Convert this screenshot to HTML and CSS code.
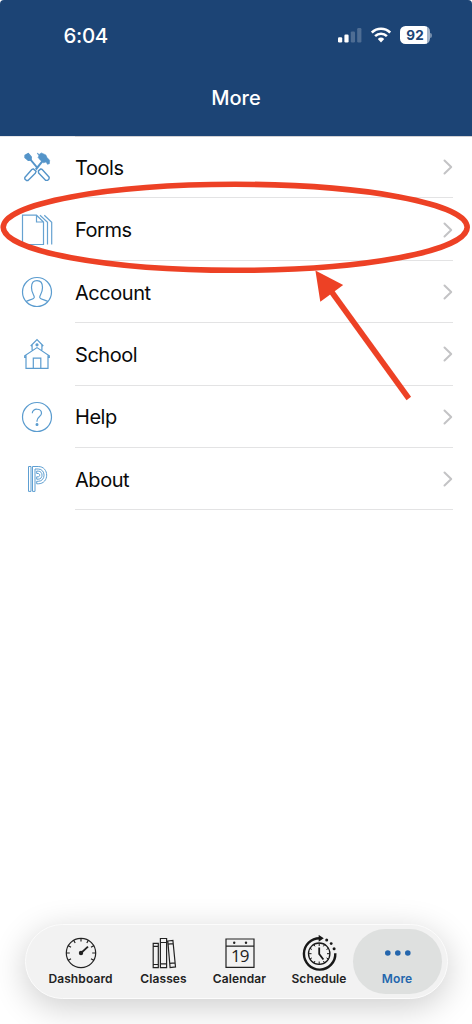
FILE: index.html
```html
<!DOCTYPE html>
<html lang="en">
<head>
<meta charset="utf-8">
<title>More</title>
<link rel="stylesheet" href="styles.css">
</head>
<body>
<div class="screen">
  <header class="header">
    <div class="status">
      <span class="time">6:04</span>
      <div class="indicators">
        <svg class="signal" width="24" height="16" viewBox="0 0 24 16" fill="#fff"><rect x="0" y="10.3" width="4.2" height="5.2" rx="1.2"/><rect x="6.4" y="7.6" width="4.2" height="7.9" rx="1.2"/><g opacity=".22"><rect x="12.8" y="4.4" width="4.2" height="11.1" rx="1.2"/><rect x="19.2" y="1" width="4.2" height="14.5" rx="1.2"/></g></svg>
        <svg class="wifi" width="20" height="16" viewBox="0 0 20 16" fill="none" stroke="#fff" stroke-width="2.6"><path d="M.8 5.5a13.2 13.2 0 0 1 18.4 0"/><path d="M4.1 9.1a8.6 8.6 0 0 1 11.8 0"/><path d="M6.8 12.1a4.7 4.7 0 0 1 6.4 0L10 15.6z" fill="#fff" stroke="none"/></svg>
        <div class="battery"><span>92</span></div>
        <i class="battery-cap"></i>
      </div>
    </div>
    <h1 class="title">More</h1>
  </header>

  <main class="list">
    <div class="row">
      <svg class="icon" viewBox="0 -.7 32 32" fill="none" stroke="#5494c9" stroke-width="1.4" stroke-linejoin="round"><path d="M4.1 3.6 7.2 1.8 10.2 5.2 10 8.4 7.2 8.6 4 5.8z" fill="#5494c9"/><path d="M9.5 8 16.4 16.2" stroke-width="1.8"/><path d="M14.8 17.8 21.5 9.5" stroke-width="2"/><path d="M16.2 1.4 18.2 2.7 20.3 1.2 24.8 3.2 26 5.8 28.6 8.6 28.4 12 26.4 12.6 25.2 10.2 22.4 11 19.2 8.3 17 5.6 18 4.2z" fill="#5494c9" stroke-width=".6"/><path d="M12.3 17.2 15.1 19.6 14.3 21.6 7 28.8 5.5 28.8 3.8 27.2 3.8 25.8 10.6 18zM17.4 19.2 19.8 17.2 21.2 17.8 28.2 25.5 28 27.3 26.5 28.7 24.8 28.7 17.6 21.3z"/></svg>
      <span class="label">Tools</span>
      <svg class="chevron" viewBox="0 0 10 16"><path d="M1.5 1.5 8.2 8 1.5 14.5"/></svg>
    </div>
    <div class="row">
      <svg class="icon" viewBox="0 0 32 32" fill="none" stroke="#66a2d1" stroke-width="1.2"><path d="M1.5 1.2H15.5L22.5 8V30.5H1.5zM15.5 1.2V8H22.5M19 1.2 26.5 8.2V30.5M23.3 1.2 30.7 8.2V30.5"/></svg>
      <span class="label">Forms</span>
      <svg class="chevron" viewBox="0 0 10 16"><path d="M1.5 1.5 8.2 8 1.5 14.5"/></svg>
    </div>
    <div class="row">
      <svg class="icon" viewBox="0 0 32 32" fill="none" stroke="#5b9ccf" stroke-width="1.2"><circle cx="16" cy="16" r="14.5"/><path d="M5 25.6C7.5 23.8 13.3 23.4 13.3 21.2 13.3 18.7 10.5 17.5 10.5 11.5 10.5 6.5 12.5 4.7 16 4.7S21.5 6.5 21.5 11.5C21.5 17.5 18.7 18.7 18.7 21.2 18.7 23.4 24.5 23.8 27 25.6"/></svg>
      <span class="label">Account</span>
      <svg class="chevron" viewBox="0 0 10 16"><path d="M1.5 1.5 8.2 8 1.5 14.5"/></svg>
    </div>
    <div class="row">
      <svg class="icon" viewBox="0 0 32 32" fill="none" stroke="#5b9ccf" stroke-width="1.2"><path d="M9.7 8 16 1.6 22.3 8M11.1 7V13M20.9 7V13M3.7 20V17.8L16 9.6 28.3 17.8V20M5 17.5V30.3H27V17.5M12.3 30V20.2H19.8V30M3.7 19.5H5M27 19.5H28.3"/><circle cx="16" cy="6.8" r="1" fill="#5b9ccf"/></svg>
      <span class="label">School</span>
      <svg class="chevron" viewBox="0 0 10 16"><path d="M1.5 1.5 8.2 8 1.5 14.5"/></svg>
    </div>
    <div class="row">
      <svg class="icon" viewBox="0 0 32 32" fill="none" stroke="#5b9ccf" stroke-width="1.2"><circle cx="16" cy="16" r="14.5"/><path d="M11.3 12.2C11.3 6.8 20.5 7 20.5 12.2 20.5 15.8 16 15.7 16 19.7V20.7"/><circle cx="16" cy="23.5" r=".9" fill="#5b9ccf"/></svg>
      <span class="label">Help</span>
      <svg class="chevron" viewBox="0 0 10 16"><path d="M1.5 1.5 8.2 8 1.5 14.5"/></svg>
    </div>
    <div class="row">
      <svg class="icon" viewBox="0 0 32 32" fill="none" stroke="#5e9fd2" stroke-width="1"><path d="M7.5 3.5H10V28.4H7.5z"/><path d="M11.5 3.5H17.2C28.5 3.5 28.5 20.8 17.2 20.8H15.7V18.3H17.2C25 18.3 25 6 17.2 6H14V28.4H11.5z"/><path d="M15.7 8.1H17.2C22.3 8.1 22.3 16.2 17.2 16.2H15.7V13.8H17.2C19.2 13.8 19.2 10.5 17.2 10.5H15.7z"/></svg>
      <span class="label">About</span>
      <svg class="chevron" viewBox="0 0 10 16"><path d="M1.5 1.5 8.2 8 1.5 14.5"/></svg>
    </div>
  </main>

  <nav class="tabs">
    <div class="tab">
      <svg class="tab-icon" viewBox="0 0 36 36" fill="none" stroke="#222" stroke-width="1.2"><circle cx="18" cy="18" r="14.7"/><path d="M18 3V6.5M3 18H6.8M29.2 18H33M10.5 5 12.2 8M25.5 5 23.8 8M5 10.5 8 12.2M31 10.5 28 12.2M5 25.5 8 23.8M31 25.5 28 23.8"/><path d="M18 18 25 11.7" stroke-width="1.8"/><circle cx="18" cy="18" r="2.2" fill="#222" stroke="none"/></svg>
      <span class="tab-label">Dashboard</span>
    </div>
    <div class="tab">
      <svg class="tab-icon" viewBox="0 0 36 36" fill="none" stroke="#222" stroke-width="1.2"><path d="M7.2 8.3H12.3V32.6H7.2zM7.2 11.3H12.3M7.2 29.5H12.3M14.4 3.5H20.6V32.6H14.4zM14.4 7.5H20.6M14.4 28.8H20.6M21.8 6 26.9 5.5 29.5 31.9 24.1 32.5zM22.1 9.1 27.2 8.6M23.7 28.4 29.1 27.9"/></svg>
      <span class="tab-label">Classes</span>
    </div>
    <div class="tab tab-calendar">
      <svg class="tab-icon" viewBox="0 0 36 36" fill="none" stroke="#222" stroke-width="1.2"><path d="M4 4H32V32.3H4zM4 11.2H32"/><circle cx="12.2" cy="7.8" r="1.2" fill="#222" stroke="none"/><circle cx="24" cy="7.8" r="1.2" fill="#222" stroke="none"/><text class="date" x="17.8" y="27.3" text-anchor="middle">19</text></svg>
      <span class="tab-label">Calendar</span>
    </div>
    <div class="tab">
      <svg class="tab-icon" viewBox="0 0 36 36" fill="none" stroke="#181818" stroke-width="1.3"><circle cx="18.2" cy="18.7" r="10.7"/><path d="M18.2 8V11M18.2 26.5V29.4M7.5 18.7H10.5M26 18.7H29M12.8 9.4 14 11.4M23.6 9.4 22.4 11.4M8.9 13.3 10.9 14.5M27.5 13.3 25.5 14.5M8.9 24.1 10.9 22.9M27.5 24.1 25.5 22.9M12.8 28 14 26M23.6 28 22.4 26" stroke-width="1"/><path d="M18.2 12.4V19L22.4 24.5" stroke-width="1.8"/><path d="M19 3.2A15.7 15.7 0 1 0 34.3 18.2" stroke-width="2.4"/><path d="M17.7-.1 22.8 3.3 17.7 6.7z" fill="#181818" stroke="none"/><g fill="#181818" stroke="none"><circle cx="25.7" cy="5.1" r="1.5"/><circle cx="30.2" cy="8.6" r="1.4"/><circle cx="33.1" cy="13.7" r="1.5"/></g></svg>
      <span class="tab-label">Schedule</span>
    </div>
    <div class="tab tab-active">
      <svg class="tab-icon" viewBox="0 0 36 36" fill="#2466ad"><circle cx="8.8" cy="18" r="2.8"/><circle cx="18.8" cy="18" r="2.8"/><circle cx="28.8" cy="18" r="2.8"/></svg>
      <span class="tab-label">More</span>
    </div>
  </nav>

  <svg class="annotation" viewBox="0 0 472 1024" fill="none" stroke="#ed4125" stroke-width="5.6"><ellipse cx="235.2" cy="227.3" rx="232" ry="43"/><path d="M331 291 408.8 398.5"/><path d="M315.4 270.4 343.2 285 320.3 301.8z" fill="#ed4125" stroke="none"/></svg>
</div>
</body>
</html>
```
FILE: styles.css
```css
* { box-sizing: border-box; }
body { margin: 0; background: #fff; font-family: Inter, "Liberation Sans", sans-serif; }
.screen {
  position: relative;
  display: flex;
  flex-direction: column;
  width: 472px;
  height: 1024px;
  overflow: hidden;
  background: #fff;
}
.header {
  height: 136px;
  background: #1c4475;
  border-radius: 4px 4px 0 0;
  color: #fff;
}
.status {
  display: flex;
  justify-content: space-between;
  align-items: center;
  height: 70px;
  padding: 0 40px 0 63.5px;
}
.time { font-size: 20.5px; font-weight: 500; letter-spacing: -.35px; }
.indicators { display: flex; align-items: center; }
.wifi { margin-left: 9px; }
.battery {
  display: flex;
  align-items: center;
  justify-content: center;
  width: 30px;
  height: 17.5px;
  margin-left: 9px;
  border-radius: 5.5px;
  background: linear-gradient(90deg, #fff 91%, #a4b4c8 91%);
  color: #1c4475;
  font-size: 13.5px;
  font-weight: 700;
}
.battery-cap {
  width: 2px;
  height: 5px;
  border-radius: 0 2px 2px 0;
  background: #738caa;
}
.title {
  margin: 0;
  padding-top: 14px;
  font-size: 20px;
  line-height: 28px;
  font-weight: 500;
  text-align: center;
}
.list {
  display: flex;
  flex-direction: column;
  background: linear-gradient(90deg, #e6e6e8 75px, #d0d0d3 75px) 0 0 / 100% 1px no-repeat;
}
.row {
  display: grid;
  grid-template-columns: 54px 1fr 10px;
  align-items: center;
  height: 62.4px;
  padding: 0 19px 0 21px;
  background: linear-gradient(#e3e3e4, #e3e3e4) 75px 100% / 378px 1px no-repeat;
}
.icon { width: 32px; height: 32px; }
.label { padding-top: 1.2px; font-size: 20px; line-height: 26px; letter-spacing: -.45px; color: #0a0a0a; }
.chevron {
  width: 10px;
  height: 16px;
  fill: none;
  stroke: #c3c3c5;
  stroke-width: 2;
  stroke-linecap: round;
  stroke-linejoin: round;
}
.tabs {
  display: grid;
  grid-template-columns: 88px 78px 83px 67px 89px;
  width: 423px;
  height: 75px;
  margin: auto 0 25px 24.5px;
  padding: 3.5px 0 4px 11px;
  border: 1.5px solid #fcfcfc;
  border-radius: 38px;
  background: #f2f2f2;
  box-shadow: 0 8px 34px rgba(0, 0, 0, .2);
}
.tab {
  display: flex;
  flex-direction: column;
  align-items: center;
  height: 65px;
  padding-top: 6.5px;
  border-radius: 33px;
  color: #222;
}
.tab-calendar { padding-right: 9px; }
.tab-icon { width: 36px; height: 36px; flex: none; }
.tab-label { font-size: 12px; line-height: 15.5px; font-weight: 600; letter-spacing: .1px; white-space: nowrap; }
.date { font: 17px "Open Sans", sans-serif; letter-spacing: -.8px; fill: #222; stroke: none; }
.tab-active { background: #dee0df; color: #2466ad; }
.annotation {
  position: absolute;
  inset: 0;
  width: 472px;
  height: 1024px;
  pointer-events: none;
}
```
